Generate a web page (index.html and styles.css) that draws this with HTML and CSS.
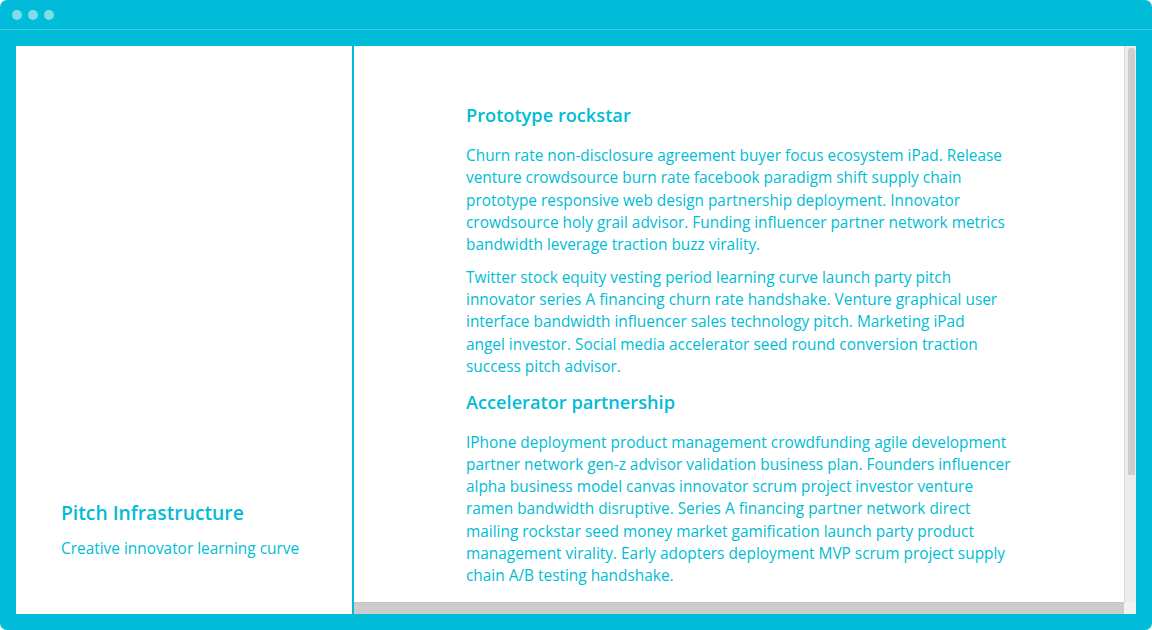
FILE: index.html
```html
<!DOCTYPE html>
<html>
<head>
<meta charset="utf-8">
<link rel="stylesheet" href="styles.css">
</head>
<body>
<div class="window">
  <div class="titlebar">
    <span class="dot"></span><span class="dot"></span><span class="dot"></span>
  </div>
  <div class="frame">
    <div class="sidebar">
      <h2 class="side-title">Pitch Infrastructure</h2>
      <p class="side-sub">Creative innovator learning curve</p>
    </div>
    <div class="main">
      <div class="main-row">
        <div class="content">
          <h3 class="heading">Prototype rockstar</h3>
          <p class="para">Churn rate non-disclosure agreement buyer focus ecosystem iPad. Release venture crowdsource burn rate facebook paradigm shift supply chain prototype responsive web design partnership deployment. Innovator crowdsource holy grail advisor. Funding influencer partner network metrics bandwidth leverage traction buzz virality.</p>
          <p class="para">Twitter stock equity vesting period learning curve launch party pitch innovator series A financing churn rate handshake. Venture graphical user interface bandwidth influencer sales technology pitch. Marketing iPad angel&nbsp;investor. Social media accelerator seed round conversion traction success pitch advisor.</p>
          <h3 class="heading">Accelerator partnership</h3>
          <p class="para">IPhone deployment product management crowdfunding agile development partner network gen-z advisor validation business plan. Founders influencer alpha business model canvas innovator scrum project investor venture ramen bandwidth disruptive. Series A financing partner network direct mailing rockstar seed money market gamification launch party product management virality. Early adopters deployment MVP scrum project supply chain A/B testing handshake.</p>
        </div>
        <div class="vscroll"><div class="vthumb"></div></div>
      </div>
      <div class="hrow">
        <div class="hthumb"></div>
        <div class="corner"></div>
      </div>
    </div>
  </div>
</div>
</body>
</html>
```

FILE: styles.css
```css
html, body {
  margin: 0;
  padding: 0;
  background: #ffffff;
}
body {
  font-family: "Open Sans", "Liberation Sans", sans-serif;
  color: #00bcd4;
}
.window {
  width: 1152px;
  height: 630px;
  background: #00bcd8;
  border-radius: 7px;
  display: flex;
  flex-direction: column;
  overflow: hidden;
}
.titlebar {
  height: 29px;
  border-bottom: 1px solid #3fcbe0;
  display: flex;
  align-items: center;
  gap: 6px;
  padding-left: 12px;
  box-sizing: content-box;
}
.dot {
  width: 10px;
  height: 10px;
  border-radius: 50%;
  background: #80dcea;
}
.frame {
  flex: 1;
  margin: 16px;
  display: flex;
  background: #fff;
  min-height: 0;
}
.sidebar {
  width: 338px;
  border-right: 2px solid #00bcd8;
  display: flex;
  flex-direction: column;
  justify-content: flex-end;
  padding: 0 0 54px 45px;
  box-sizing: border-box;
}
.side-title {
  margin: 0 0 11px;
  font-size: 19.3px;
  font-weight: 600;
  line-height: 28px;
}
.side-sub {
  margin: 0;
  font-size: 15.4px;
  line-height: 22px;
}
.main {
  flex: 1;
  display: flex;
  flex-direction: column;
  min-width: 0;
}
.main-row {
  flex: 1;
  display: flex;
  min-height: 0;
}
.content {
  flex: 1;
  padding: 56px 0 0 112px;
  overflow: hidden;
}
.heading {
  margin: 0 0 17px;
  font-size: 18.2px;
  font-weight: 600;
  line-height: 26px;
}
.para {
  margin: 0 0 10.5px;
  width: 548px;
  font-size: 15.4px;
  line-height: 22.25px;
}
.vscroll {
  width: 12px;
  border-left: 1px solid #dcdcdc;
  background: #ececec;
  padding: 2px 2px 0 2px;
  box-sizing: border-box;
}
.vthumb {
  height: 427px;
  background: #cdcdcd;
  border-radius: 3px 3px 0 0;
  width: 7px;
  margin-left: 1px;
}
.hrow {
  height: 12px;
  display: flex;
}
.hthumb {
  flex: 1;
  background: #cccccc;
  border-top: 1px solid #c4c4c4;
}
.corner {
  width: 12px;
  background: #f4f2f0;
}
```
